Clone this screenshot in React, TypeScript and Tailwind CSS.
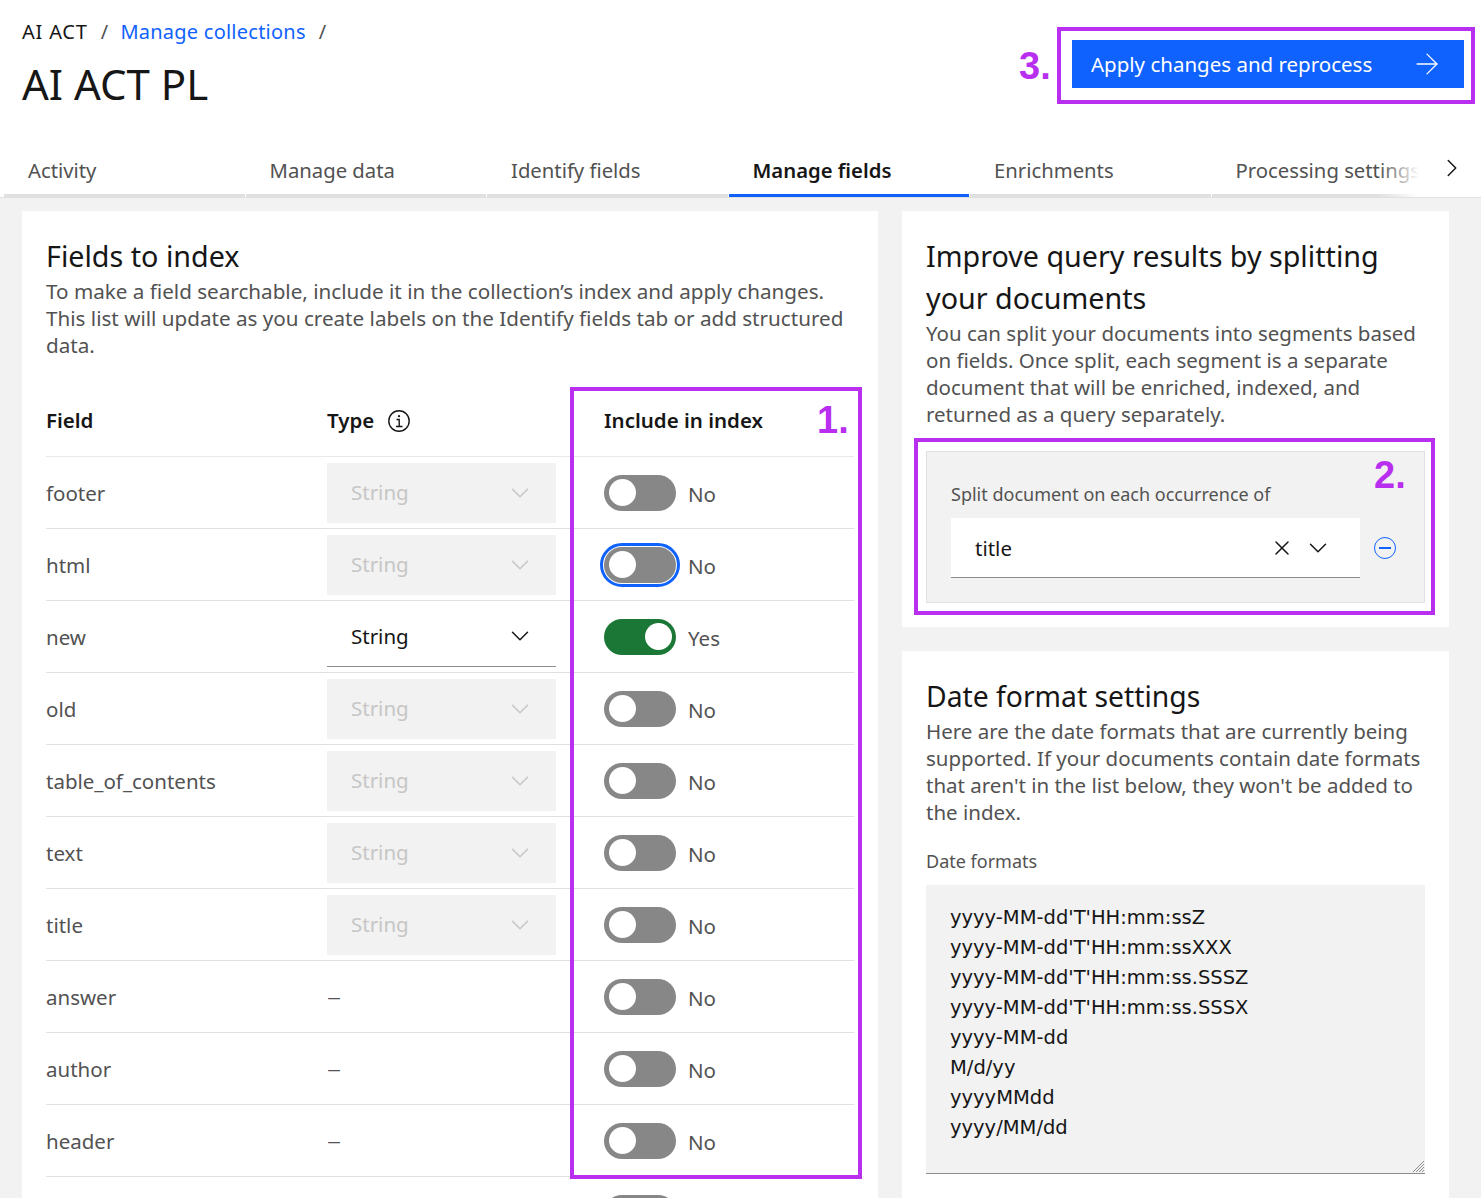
import { ArrowRight, ChevronDown, ChevronRight, X } from "lucide-react";

const TABS = ["Activity", "Manage data", "Identify fields", "Manage fields", "Enrichments", "Processing settings"];

interface FieldRow {
  name: string;
  type?: "disabled" | "active";
  on?: boolean;
  focused?: boolean;
}

const ROWS: FieldRow[] = [
  { name: "footer", type: "disabled" },
  { name: "html", type: "disabled", focused: true },
  { name: "new", type: "active", on: true },
  { name: "old", type: "disabled" },
  { name: "table_of_contents", type: "disabled" },
  { name: "text", type: "disabled" },
  { name: "title", type: "disabled" },
  { name: "answer" },
  { name: "author" },
  { name: "header" },
];

const DATE_FORMATS = [
  "yyyy-MM-dd'T'HH:mm:ssZ",
  "yyyy-MM-dd'T'HH:mm:ssXXX",
  "yyyy-MM-dd'T'HH:mm:ss.SSSZ",
  "yyyy-MM-dd'T'HH:mm:ss.SSSX",
  "yyyy-MM-dd",
  "M/d/yy",
  "yyyyMMdd",
  "yyyy/MM/dd",
];

function Toggle({ on, focused }: { on?: boolean; focused?: boolean }) {
  return (
    <div
      className={`flex h-[36px] w-[72px] shrink-0 items-center rounded-full ${on ? "justify-end bg-[#1a7735] pr-[4px]" : "justify-start bg-[#878787] pl-[5px]"} ${focused ? "outline-[3px] outline-offset-[1px] outline-[#0f62fe]" : ""}`}
    >
      <div className="h-[27px] w-[27px] rounded-full bg-white" />
    </div>
  );
}

function TypeCell({ type }: { type?: FieldRow["type"] }) {
  if (!type) return <span className="-mt-[4px] block text-[28px] leading-none font-light text-[#525252]">–</span>;
  const active = type === "active";
  return (
    <div
      className={`flex h-[60px] w-[229px] items-center justify-between pl-[24px] pr-[21px] ${active ? "border-b border-[#8d8d8d] text-[#161616]" : "bg-[#f2f2f2] text-[#c6c6c6]"}`}
    >
      <span>String</span>
      <ChevronDown size={30} strokeWidth={1.2} className={active ? "text-[#161616]" : "text-[#c6c6c6]"} />
    </div>
  );
}

function Annotation({ label, className }: { label: string; className: string }) {
  return (
    <div className={`pointer-events-none absolute border-[4px] border-[#b92ff0] ${className}`}>
      <span className="absolute font-['Liberation_Sans',sans-serif] text-[38px] font-bold leading-none text-[#b92ff0]">
        {label}
      </span>
    </div>
  );
}

export default function App() {
  return (
    <div className="relative h-[1198px] w-[1481px] overflow-hidden bg-[#f2f2f2] font-['Noto_Sans',sans-serif] text-[20.5px] text-[#525252]">
      {/* Header */}
      <div className="h-[198px] border-b border-[#e0e0e0] bg-white">
        <div className="flex h-[147px] items-start justify-between pl-[22px] pr-[17px]">
          <div className="pt-[18px]">
            <div className="flex items-center text-[20px] leading-[28px] tracking-[0.24px] text-[#161616]">
              <span className="tracking-[0.8px]">AI ACT</span>
              <span className="ml-[13px] mr-[12px] text-[#525252]">/</span>
              <span className="text-[#0f62fe]">Manage collections</span>
              <span className="mx-[13px] text-[#525252]">/</span>
            </div>
            <h1 className="mt-[11px] text-[42px] font-normal leading-[54px] text-[#161616]">AI ACT PL</h1>
          </div>
          <button className="mt-[40px] flex h-[48px] w-[392px] items-center justify-between bg-[#0f62fe] pl-[19px] pr-[20px] text-white">
            <span className="mt-[1px]">Apply changes and reprocess</span>
            <ArrowRight size={34} strokeWidth={0.9} />
          </button>
        </div>
        <div className="relative flex h-[50px] pl-[4px] text-[20.3px]">
          {TABS.map((tab) => {
            const selected = tab === "Manage fields";
            return (
              <div
                key={tab}
                className={`mr-[1px] h-[50px] w-[240.5px] shrink-0 overflow-hidden whitespace-nowrap border-b-[3px] pl-[24px] pt-[9px] leading-[28px] ${selected ? "border-[#0f62fe] font-semibold text-[#161616]" : "border-[#e0e0e0]"}`}
              >
                {tab}
              </div>
            );
          })}
          <div className="absolute right-0 top-0 h-[50px] w-[62px] bg-white pl-[18px] pt-[6px] text-[#161616]">
            <ChevronRight size={30} strokeWidth={1.2} />
          </div>
          <div className="absolute right-[62px] top-0 h-[50px] w-[40px] bg-gradient-to-r from-transparent to-white" />
        </div>
      </div>

      {/* Content */}
      <div className="flex items-start gap-[24px] pl-[22px] pt-[13px]">
        <section className="w-[856px] bg-white px-[24px] pt-[24px]">
          <h2 className="text-[28.7px] font-normal leading-[42px] text-[#161616]">Fields to index</h2>
          <p className="mt-[1px] w-[808px] text-[20.65px] leading-[27px]">
            To make a field searchable, include it in the collection’s index and apply changes. This list will update as you create labels on the Identify fields tab or add structured data.
          </p>
          <div className="mt-[29px] flex h-[69px] items-center border-b border-[#e9e9e9] pb-[3px] font-semibold text-[#161616]">
            <div className="w-[281px]">Field</div>
            <div className="flex w-[277px] items-center gap-[13px]">
              Type
              <svg viewBox="0 0 24 24" className="h-[24px] w-[24px]" fill="none" stroke="currentColor" strokeWidth="1.4">
                <circle cx="12" cy="12" r="10.2" />
                <path d="M9.5 10.5H12.2V17.5M9 17.5H15.5" />
                <circle cx="12" cy="7.2" r="1.1" fill="currentColor" stroke="none" />
              </svg>
            </div>
            <div>Include in index</div>
          </div>
          {ROWS.map((row) => (
            <div key={row.name} className="flex h-[72px] items-center border-b border-[#e0e0e0]">
              <div className="mt-[2px] w-[281px] whitespace-nowrap">{row.name}</div>
              <div className="w-[277px]">
                <TypeCell type={row.type} />
              </div>
              <Toggle on={row.on} focused={row.focused} />
              <span className="ml-[12px] mt-[3px]">{row.on ? "Yes" : "No"}</span>
            </div>
          ))}
          {/* next row is cut off by the window, only its toggle peeks in */}
          <div className="flex h-[72px] pl-[558px] pt-[18px]">
            <Toggle />
          </div>
        </section>

        <div className="flex w-[547px] flex-col gap-[24px]">
          <section className="h-[416px] bg-white px-[24px] pt-[24px]">
            <h2 className="text-[28.7px] font-normal leading-[42px] text-[#161616]">
              Improve query results by splitting your documents
            </h2>
            <p className="mt-[1px] leading-[27px]">
              You can split your documents into segments based on fields. Once split, each segment is a separate document that will be enriched, indexed, and returned as a query separately.
            </p>
            <div className="mt-[23px] h-[152px] border border-[#e0e0e0] bg-[#f2f2f2] pl-[24px] pt-[29px]">
              <div className="text-[18px] leading-[27px]">Split document on each occurrence of</div>
              <div className="mt-[10px] flex items-center">
                <div className="flex h-[60px] w-[409px] items-center justify-between border-b border-[#8d8d8d] bg-white pl-[24px] pr-[27px] text-[#161616]">
                  <span className="mt-[1px]">title</span>
                  <div className="flex items-center gap-[9px]">
                    <X size={24} strokeWidth={1.5} />
                    <ChevronDown size={30} strokeWidth={1.2} />
                  </div>
                </div>
                <div className="ml-[14px] flex h-[22px] w-[22px] items-center justify-center rounded-full border-[1.5px] border-[#0f62fe]">
                  <div className="h-[2px] w-[12px] bg-[#0f62fe]" />
                </div>
              </div>
            </div>
          </section>

          <section className="bg-white px-[24px] pb-[40px] pt-[24px]">
            <h2 className="text-[28.3px] font-normal leading-[42px] text-[#161616]">Date format settings</h2>
            <p className="mt-[1px] leading-[27px]">
              Here are the date formats that are currently being supported. If your documents contain date formats that aren't in the list below, they won't be added to the index.
            </p>
            <div className="mt-[22px] text-[18px] leading-[27px]">Date formats</div>
            <div className="relative mt-[10px] h-[289px] border-b border-[#8d8d8d] bg-[#f2f2f2] pl-[24px] pt-[18px] font-['DejaVu_Sans',sans-serif] text-[19.5px] text-[#161616]">
              {DATE_FORMATS.map((f) => (
                <div key={f} className="leading-[30px]">
                  {f}
                </div>
              ))}
              <svg viewBox="0 0 13 13" className="absolute bottom-0 right-0 h-[13px] w-[13px]" stroke="#8d8d8d" fill="none">
                <path d="M1 12 12 1M4 12l8-8M7 12l5-5M10 12l2-2" />
              </svg>
            </div>
          </section>
        </div>
      </div>

      <Annotation label="1." className="left-[570px] top-[387px] h-[792px] w-[292px] [&>span]:left-[243px] [&>span]:top-[10px]" />
      <Annotation label="2." className="left-[914px] top-[438px] h-[177px] w-[521px] [&>span]:left-[456px] [&>span]:top-[14px]" />
      <Annotation label="3." className="left-[1057px] top-[27px] h-[77px] w-[418px] [&>span]:-left-[42px] [&>span]:top-[16px]" />
    </div>
  );
}
